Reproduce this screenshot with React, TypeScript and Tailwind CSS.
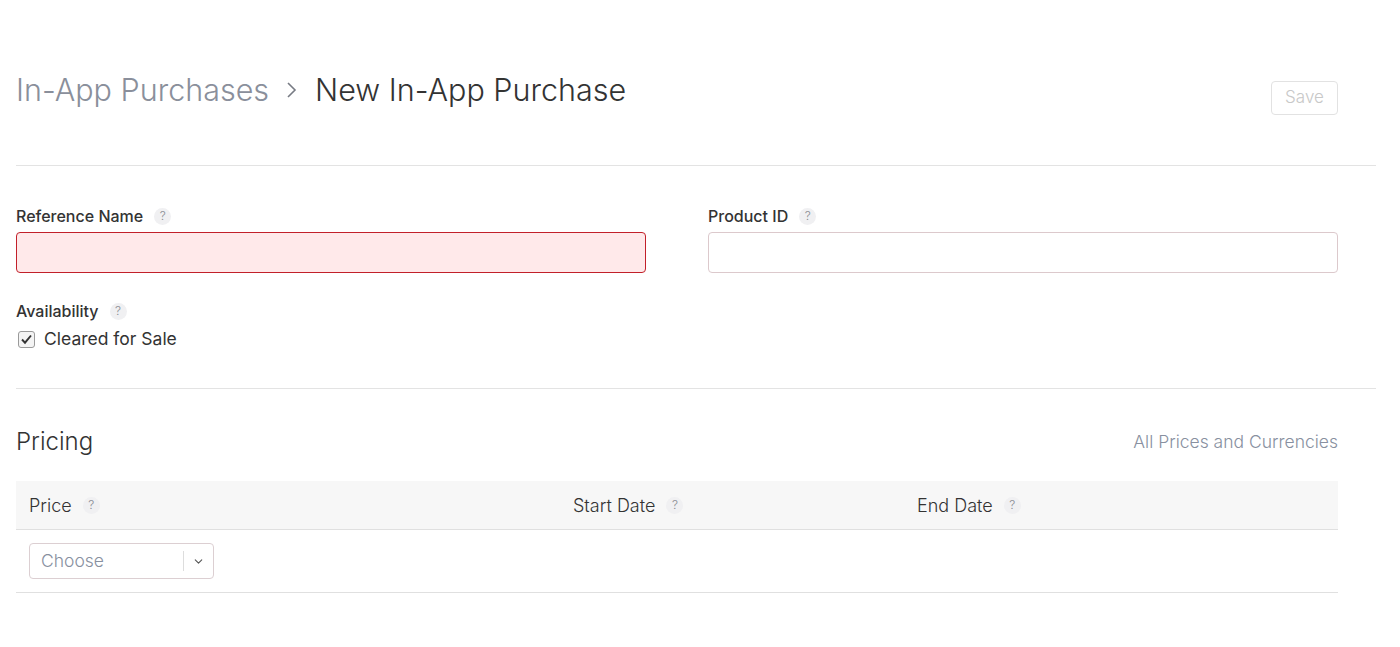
import { ChevronDown } from 'lucide-react';

const Help = () => (
  <span className="ml-[11px] inline-flex h-[17px] w-[17px] items-center justify-center rounded-full bg-[#f0f0f2] text-[12px] font-light leading-none text-[#8a8d93]">
    ?
  </span>
);

export default function App() {
  return (
    <div className="min-h-screen bg-white pl-4 pr-6 font-['Inter','Noto_Sans',sans-serif] text-[#333]">
      {/* header */}
      <div className="flex items-start justify-between pt-[72px] pr-[38px]">
        <h1 className="flex items-center text-[30.5px] font-light leading-[36px]">
          <span className="text-[#8a8f9b]">In-App Purchases</span>
          <svg width="12" height="20" viewBox="0 0 12 20" className="mx-[17px]" fill="none">
            <path d="M2 3l7 7-7 7" stroke="#777b84" strokeWidth="1.6" />
          </svg>
          <span className="text-[#333]">New In-App Purchase</span>
        </h1>
        <button className="mt-[9px] h-[34px] w-[67px] rounded-[4px] border border-[#e2e2e2] text-[17px] font-light text-[#c8c8c8]">
          Save
        </button>
      </div>

      <div className="mt-[50px] border-t border-[#e3e3e3]" />

      {/* fields */}
      <div className="pr-[38px] pt-[40px]">
        <div className="grid grid-cols-2 gap-[62px]">
          <div>
            <div className="flex items-center text-[16px] font-medium leading-[20px]">
              Reference Name <Help />
            </div>
            <div className="mt-[6px] h-[41px] rounded-[4px] border border-[#c2202a] bg-[#ffe9ea]" />
          </div>
          <div>
            <div className="flex items-center text-[16px] font-medium leading-[20px]">
              Product ID <Help />
            </div>
            <div className="mt-[6px] h-[41px] rounded-[4px] border border-[#dcc9cc] bg-white" />
          </div>
        </div>

        <div className="mt-[28px] flex items-center text-[16px] font-medium leading-[20px]">
          Availability <Help />
        </div>
        <label className="mt-[6px] flex items-center text-[17.5px] leading-[24px]">
          <span className="ml-[2px] mr-[9px] flex h-[17px] w-[17px] items-center justify-center rounded-[3px] border border-[#9a9a9a] bg-[#f4f4f4]">
            <svg width="13" height="13" viewBox="0 0 13 13" fill="none">
              <path d="M2 6.5l3 3.2L11 2.5" stroke="#333" strokeWidth="1.9" />
            </svg>
          </span>
          Cleared for Sale
        </label>
      </div>

      <div className="mt-[37px] border-t border-[#e3e3e3]" />

      {/* pricing */}
      <div className="pr-[38px] pt-[37px]">
        <div className="flex items-center justify-between">
          <h2 className="text-[24px] font-light leading-[32px]">Pricing</h2>
          <a className="text-[17.5px] font-light text-[#8890a0]">All Prices and Currencies</a>
        </div>

        <div className="mt-[23px]">
          <div className="grid h-[49px] grid-cols-[544px_344px_1fr] items-center border-b border-[#e0e0e0] bg-[#f7f7f7] text-[18px] font-light">
            <div className="flex items-center pl-[13px]">
              Price <Help />
            </div>
            <div className="flex items-center pl-[13px]">
              Start Date <Help />
            </div>
            <div className="flex items-center pl-[13px]">
              End Date <Help />
            </div>
          </div>
          <div className="border-b border-[#e0e0e0] pb-[13px] pl-[13px] pt-[13px]">
            <div className="flex h-[36px] w-[185px] items-center rounded-[4px] border border-[#dccfd2] bg-white">
              <span className="flex-1 pl-[11px] text-[17.5px] font-light text-[#8890a0]">Choose</span>
              <span className="h-[20px] border-l border-[#dddddd]" />
              <span className="flex w-[29px] items-center justify-center">
                <ChevronDown size={13} strokeWidth={2} className="text-[#555]" />
              </span>
            </div>
          </div>
        </div>
      </div>
    </div>
  );
}
